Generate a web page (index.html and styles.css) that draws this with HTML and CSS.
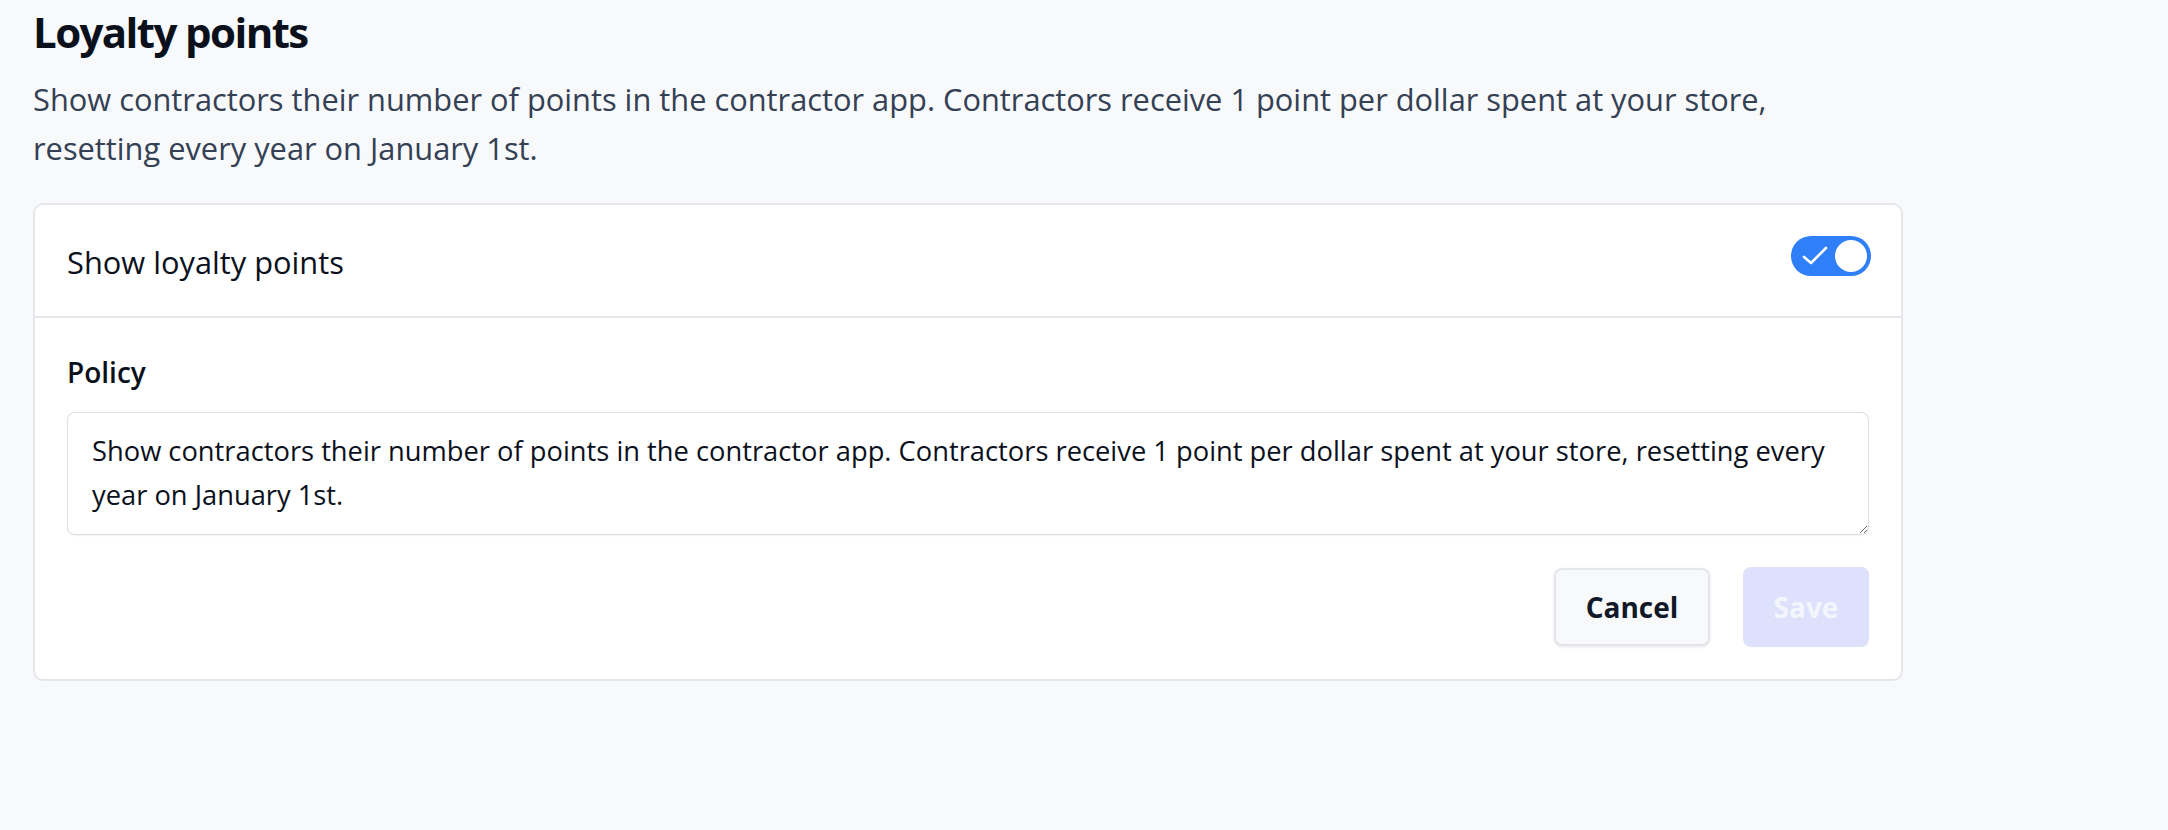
FILE: index.html
```html
<!DOCTYPE html>
<html lang="en">
<head>
    <meta charset="UTF-8">
    <meta name="viewport" content="width=device-width, initial-scale=1.0">
    <title>Loyalty points</title>
    <link rel="stylesheet" href="styles.css">
</head>
<body>
    <div class="page">
        <h1>Loyalty points</h1>
        <p class="intro">Show contractors their number of points in the contractor app. Contractors receive 1 point per dollar spent at your store, resetting every year on January 1st.</p>

        <div class="card">
            <div class="card-header">
                <span class="setting-name">Show loyalty points</span>
                <label class="toggle">
                    <input type="checkbox" checked>
                    <span class="track">
                        <svg class="check" width="26" height="20" viewBox="0 0 26 20" fill="none">
                            <path d="M2 11 L9 17 L24 2" stroke="#fff" stroke-width="2.6" stroke-linecap="round" stroke-linejoin="round"/>
                        </svg>
                        <span class="thumb"></span>
                    </span>
                </label>
            </div>

            <div class="card-body">
                <label class="field-label" for="policy">Policy</label>
                <textarea id="policy" class="policy">Show contractors their number of points in the contractor app. Contractors receive 1 point per dollar spent at your store, resetting every year on January 1st.</textarea>
                <div class="actions">
                    <button class="btn btn-cancel">Cancel</button>
                    <button class="btn btn-save" disabled>Save</button>
                </div>
            </div>
        </div>
    </div>
</body>
</html>
```

FILE: styles.css
```css
* {
    box-sizing: border-box;
}

body {
    margin: 0;
    padding: 0;
    background: #f8f9fb;
    font-family: "Open Sans", "Noto Sans", sans-serif;
    color: #0f1623;
}

.page {
    width: 1870px;
    margin-left: 33px;
}

h1 {
    margin: 0;
    font-size: 42px;
    font-weight: 700;
    line-height: 63px;
    letter-spacing: -1.6px;
    color: #0b111c;
}

.intro {
    max-width: 1800px;
    margin: 12px 0 30px;
    font-size: 30.8px;
    line-height: 49px;
    color: #344054;
}

.card {
    background: #fff;
    border: 2px solid #e5e7eb;
    border-radius: 10px;
}

.card-header {
    display: flex;
    align-items: center;
    justify-content: space-between;
    height: 113px;
    padding: 0 30px 0 32px;
    border-bottom: 2px solid #e5e7eb;
}

.setting-name {
    font-size: 30.8px;
    line-height: 44px;
    padding-top: 2px;
    color: #0b111c;
}

/* switch */
.toggle {
    position: relative;
    display: block;
    margin-bottom: 9px;
    cursor: pointer;
}

.toggle input {
    position: absolute;
    opacity: 0;
    width: 0;
    height: 0;
}

.track {
    position: relative;
    display: block;
    width: 80px;
    height: 40px;
    border-radius: 20px;
    background: #2e7ff8;
}

.check {
    position: absolute;
    left: 11px;
    top: 10px;
}

.thumb {
    position: absolute;
    right: 4px;
    top: 4px;
    width: 32px;
    height: 32px;
    border-radius: 50%;
    background: #fff;
}

.card-body {
    padding: 35px 32px 32px;
}

.field-label {
    display: block;
    font-size: 28px;
    font-weight: 600;
    line-height: 38.5px;
    color: #0b111c;
}

.policy {
    display: block;
    width: 100%;
    height: 123px;
    margin-top: 20px;
    padding: 16px 24px;
    font-family: inherit;
    font-size: 27.3px;
    line-height: 44px;
    color: #0b111c;
    border: 1px solid #dcdfe4;
    border-radius: 8px;
    box-shadow: 0 1px 2px rgba(16, 24, 40, 0.06);
    resize: vertical;
    outline: none;
}

.actions {
    display: flex;
    justify-content: flex-end;
    align-items: center;
    gap: 33px;
    margin-top: 32px;
}

.btn {
    font-family: inherit;
    font-size: 28px;
    font-weight: 700;
    border-radius: 8px;
    cursor: pointer;
}

.btn-cancel {
    width: 156px;
    height: 78px;
    background: #f8f9fb;
    color: #111827;
    border: 2px solid #e4e6ea;
    box-shadow: 0 1px 3px rgba(16, 24, 40, 0.1);
}

.btn-save {
    width: 126px;
    height: 80px;
    background: #dee1fc;
    color: #f4f6fd;
    border: none;
    cursor: default;
}
```
